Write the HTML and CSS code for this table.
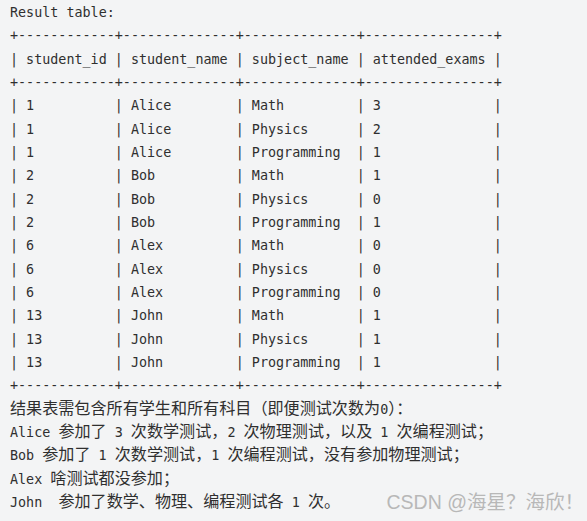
FILE: index.html
```html
<!DOCTYPE html>
<html lang="zh">
<head>
<meta charset="utf-8">
<title>Result table</title>
<link rel="stylesheet" href="styles.css">
</head>
<body>
<div class="page">
<pre class="code">Result table:
+------------+--------------+--------------+----------------+
| student_id | student_name | subject_name | attended_exams |
+------------+--------------+--------------+----------------+
| 1          | Alice        | Math         | 3              |
| 1          | Alice        | Physics      | 2              |
| 1          | Alice        | Programming  | 1              |
| 2          | Bob          | Math         | 1              |
| 2          | Bob          | Physics      | 0              |
| 2          | Bob          | Programming  | 1              |
| 6          | Alex         | Math         | 0              |
| 6          | Alex         | Physics      | 0              |
| 6          | Alex         | Programming  | 0              |
| 13         | John         | Math         | 1              |
| 13         | John         | Physics      | 1              |
| 13         | John         | Programming  | 1              |
+------------+--------------+--------------+----------------+
<span class="zh">结果表需包含所有学生和所有科目（即便测试次数为</span>0<span class="zh">）：</span>
Alice <span class="zh">参加了</span> 3 <span class="zh">次数学测试，</span>2 <span class="zh">次物理测试，以及</span> 1 <span class="zh">次编程测试；</span>
Bob <span class="zh">参加了</span> 1 <span class="zh">次数学测试，</span>1 <span class="zh">次编程测试，没有参加物理测试；</span>
Alex <span class="zh">啥测试都没参加；</span>
John  <span class="zh">参加了数学、物理、编程测试各</span> 1 <span class="zh">次。</span></pre>
<div class="watermark">CSDN @<span class="wzh">海星？海欣！</span></div>
</div>
</body>
</html>
```

FILE: styles.css
```css
html, body {
  margin: 0;
  padding: 0;
  background: #f3f4f5;
}
.page {
  position: relative;
  width: 587px;
  height: 521px;
  overflow: hidden;
  background: #f3f4f5;
}
.code {
  margin: 0;
  padding: 1px 0 0 10px;
  font-family: "DejaVu Sans Mono", "Liberation Mono", monospace;
  font-size: 13.4px;
  line-height: 23.33px;
  color: #2f2f2f;
  white-space: pre;
}
.zh {
  font-family: "Noto Sans CJK SC", sans-serif;
  font-size: 16.1px;
  line-height: 14px;
}
.watermark {
  position: absolute;
  right: 3px;
  top: 488px;
  font-family: "Liberation Sans", "Noto Sans CJK SC", sans-serif;
  font-size: 19.5px;
  line-height: 26px;
  color: #b8b8b8;
  white-space: nowrap;
}
.wzh {
  font-family: "Noto Sans CJK SC", sans-serif;
}
```
